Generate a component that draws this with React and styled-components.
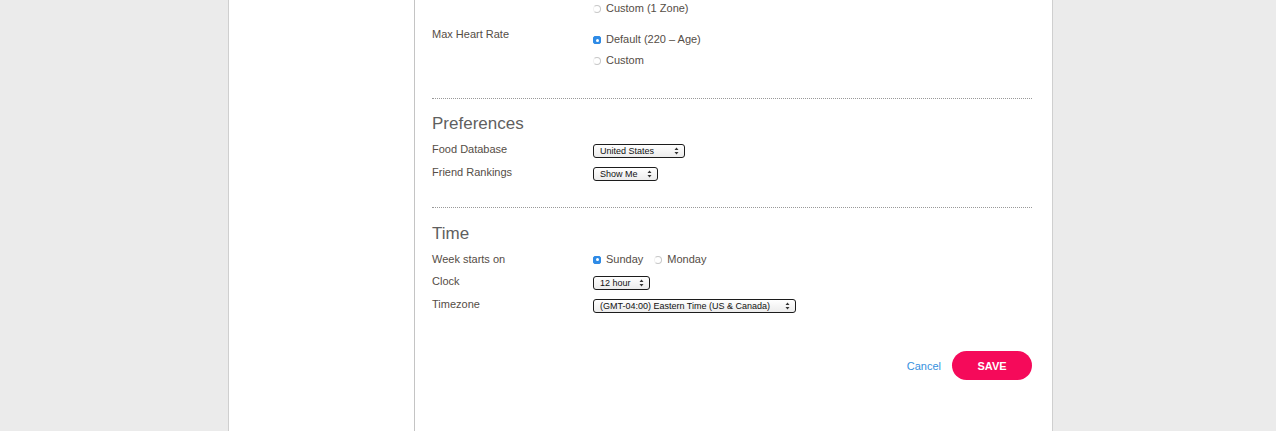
import styled, { createGlobalStyle } from "styled-components";

const GlobalStyle = createGlobalStyle`
  html, body {
    margin: 0;
    padding: 0;
    background: #ebebeb;
    font-family: "Liberation Sans", Arial, Helvetica, sans-serif;
    height: 100%;
    overflow: hidden;
  }
`;

const Page = styled.div`
  display: flex;
  width: 823px;
  height: 431px;
  margin-left: 228px;
  background: #fff;
  border-left: 1px solid #cfcfcf;
  border-right: 1px solid #cfcfcf;
`;
const Sidebar = styled.div`
  width: 185px;
  flex-shrink: 0;
  border-right: 1px solid #c4c4c4;
`;
const Content = styled.div`
  width: 600px;
  padding-left: 17px;
`;
const Row = styled.div`
  display: grid;
  grid-template-columns: 161px 1fr;
  align-items: ${p => (p.$top ? "start" : "center")};
  height: ${p => p.$height || 23}px;
  margin-top: ${p => p.$mt || 0}px;
`;
const Label = styled.div`
  font-size: 11px;
  line-height: 16px;
  color: #554d46;
`;
const Options = styled.div`
  display: flex;
  flex-direction: ${p => (p.$inline ? "row" : "column")};
  gap: ${p => (p.$inline ? "11px" : "5px")};
  padding-top: ${p => p.$pt || 0}px;
`;
const Option = styled.label`
  display: flex;
  align-items: center;
  gap: 5px;
  font-size: 11px;
  line-height: 16px;
  color: #554d46;
`;
const Radio = styled.span`
  display: inline-block;
  box-sizing: border-box;
  width: 8px;
  height: 8px;
  margin-top: 2px;
  border-radius: ${p => (p.$checked ? "2px" : "50%")};
  background: ${p => (p.$checked ? "#2f8be6" : "transparent")};
  border: 1px solid ${p => (p.$checked ? "#2f8be6" : "#c8c8c8")};
  border-left-color: ${p => (p.$checked ? "#2f8be6" : "#f2f2f2")};
  position: relative;

  &::after {
    content: "";
    display: ${p => (p.$checked ? "block" : "none")};
    position: absolute;
    left: 1.5px;
    top: 1.5px;
    width: 3px;
    height: 3px;
    border-radius: 50%;
    background: #fff;
  }
`;
const Divider = styled.hr`
  margin: 0;
  border: 0;
  border-top: 1px dotted #999;
  width: 600px;
`;
const Heading = styled.h2`
  margin: ${p => p.$mt || 15}px 0 3px;
  font-size: 17px;
  line-height: 20px;
  font-weight: normal;
  color: #5f5f5f;
`;
const Select = styled.div`
  display: inline-flex;
  align-items: center;
  justify-content: space-between;
  box-sizing: border-box;
  width: ${p => p.$width}px;
  height: 14px;
  padding: 0 5px 0 6px;
  border: 1px solid #1c1c1c;
  border-radius: 3px;
  background: linear-gradient(#fff, #ececec);
  font-size: 9px;
  color: #111;
  white-space: nowrap;
`;
const Arrows = () => (
  <svg width="5" height="8" viewBox="0 0 5 8">
    <path d="M2.5 0.5 L4.5 3 H0.5 Z M2.5 7.5 L4.5 5 H0.5 Z" fill="#333" />
  </svg>
);
const Spacer = styled.div`
  height: ${p => p.$h}px;
`;
const Actions = styled.div`
  display: flex;
  justify-content: flex-end;
  align-items: center;
  gap: 11px;
  margin-top: 36px;
`;
const Cancel = styled.a`
  font-size: 11px;
  color: #3690de;
  cursor: pointer;
`;
const SaveButton = styled.button`
  width: 80px;
  height: 29px;
  border: 0;
  border-radius: 15px;
  background: #f50a5a;
  color: #fff;
  font-family: inherit;
  font-size: 11px;
  font-weight: bold;
  cursor: pointer;
`;

export default function App() {
  return (
    <>
      <GlobalStyle />
      <Page>
        <Sidebar />
        <Content>
          <Row $height={16} $top>
            <span />
            <Options>
              <Option><Radio />Custom (1 Zone)</Option>
            </Options>
          </Row>
          <Row $height={72} $mt={10} $top>
            <Label>Max Heart Rate</Label>
            <Options $pt={5}>
              <Option><Radio $checked />Default (220 – Age)</Option>
              <Option><Radio />Custom</Option>
            </Options>
          </Row>
          <Divider />
          <Heading>Preferences</Heading>
          <Row>
            <Label>Food Database</Label>
            <div>
              <Select $width={92}>United States<Arrows /></Select>
            </div>
          </Row>
          <Row>
            <Label>Friend Rankings</Label>
            <div>
              <Select $width={65}>Show Me<Arrows /></Select>
            </div>
          </Row>
          <Spacer $h={24} />
          <Divider />
          <Heading $mt={16}>Time</Heading>
          <Row $height={23}>
            <Label>Week starts on</Label>
            <Options $inline>
              <Option><Radio $checked />Sunday</Option>
              <Option><Radio />Monday</Option>
            </Options>
          </Row>
          <Row $height={22}>
            <Label>Clock</Label>
            <div>
              <Select $width={57}>12 hour<Arrows /></Select>
            </div>
          </Row>
          <Row>
            <Label>Timezone</Label>
            <div>
              <Select $width={203}>(GMT-04:00) Eastern Time (US &amp; Canada)<Arrows /></Select>
            </div>
          </Row>
          <Actions>
            <Cancel>Cancel</Cancel>
            <SaveButton>SAVE</SaveButton>
          </Actions>
        </Content>
      </Page>
    </>
  );
}
